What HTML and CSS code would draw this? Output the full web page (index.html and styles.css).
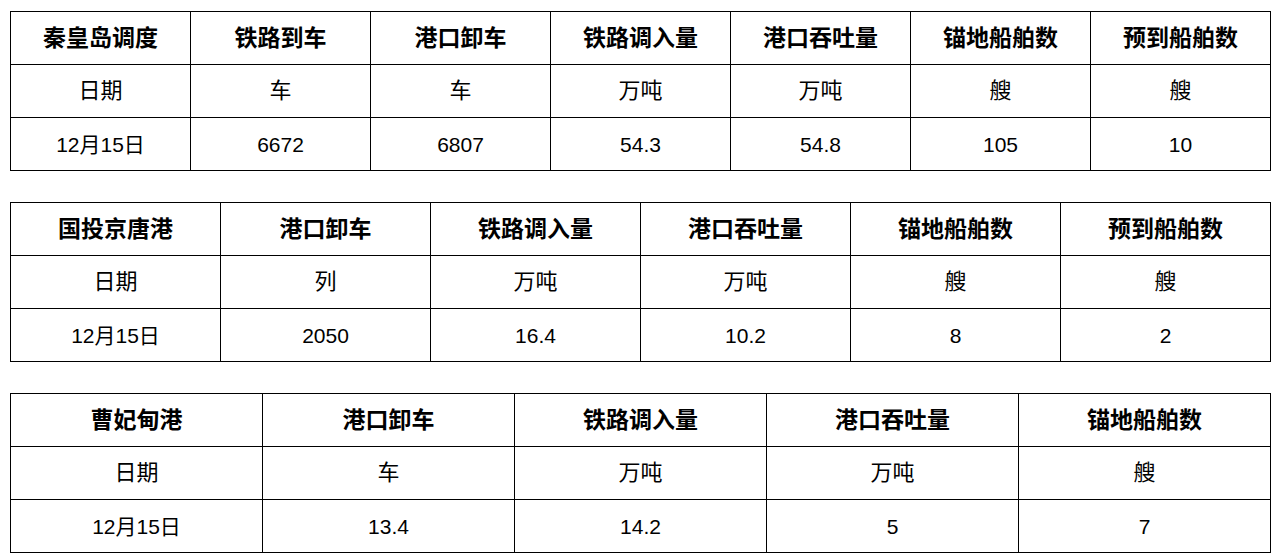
FILE: index.html
```html
<!DOCTYPE html>
<html lang="zh">
<head>
<meta charset="utf-8">
<link rel="stylesheet" href="styles.css">
</head>
<body>
<table class="grid">
  <tr class="head"><td>秦皇岛调度</td><td>铁路到车</td><td>港口卸车</td><td>铁路调入量</td><td>港口吞吐量</td><td>锚地船舶数</td><td>预到船舶数</td></tr>
  <tr><td>日期</td><td>车</td><td>车</td><td>万吨</td><td>万吨</td><td>艘</td><td>艘</td></tr>
  <tr class="data"><td>12月15日</td><td>6672</td><td>6807</td><td>54.3</td><td>54.8</td><td>105</td><td>10</td></tr>
</table>
<table class="grid">
  <tr class="head"><td>国投京唐港</td><td>港口卸车</td><td>铁路调入量</td><td>港口吞吐量</td><td>锚地船舶数</td><td>预到船舶数</td></tr>
  <tr><td>日期</td><td>列</td><td>万吨</td><td>万吨</td><td>艘</td><td>艘</td></tr>
  <tr class="data"><td>12月15日</td><td>2050</td><td>16.4</td><td>10.2</td><td>8</td><td>2</td></tr>
</table>
<table class="grid">
  <tr class="head"><td>曹妃甸港</td><td>港口卸车</td><td>铁路调入量</td><td>港口吞吐量</td><td>锚地船舶数</td></tr>
  <tr><td>日期</td><td>车</td><td>万吨</td><td>万吨</td><td>艘</td></tr>
  <tr class="data"><td>12月15日</td><td>13.4</td><td>14.2</td><td>5</td><td>7</td></tr>
</table>
</body>
</html>
```
FILE: styles.css
```css
html, body {
  margin: 0;
  padding: 0;
  background: #fff;
}
body {
  padding: 11px 8px 0 10px;
  font-family: "Liberation Sans", "Noto Sans CJK SC", sans-serif;
  font-size: 22px;
  color: #000;
}
.grid {
  width: 1261px;
  border-collapse: collapse;
  table-layout: fixed;
  margin-bottom: 31px;
}
.grid td {
  border: 1px solid #000;
  height: 52px;
  padding: 0;
  text-align: center;
  vertical-align: middle;
  line-height: 1;
}
.grid .head td {
  font-weight: bold;
  font-size: 23px;
}
.grid .data td {
  font-size: 21px;
}
```
